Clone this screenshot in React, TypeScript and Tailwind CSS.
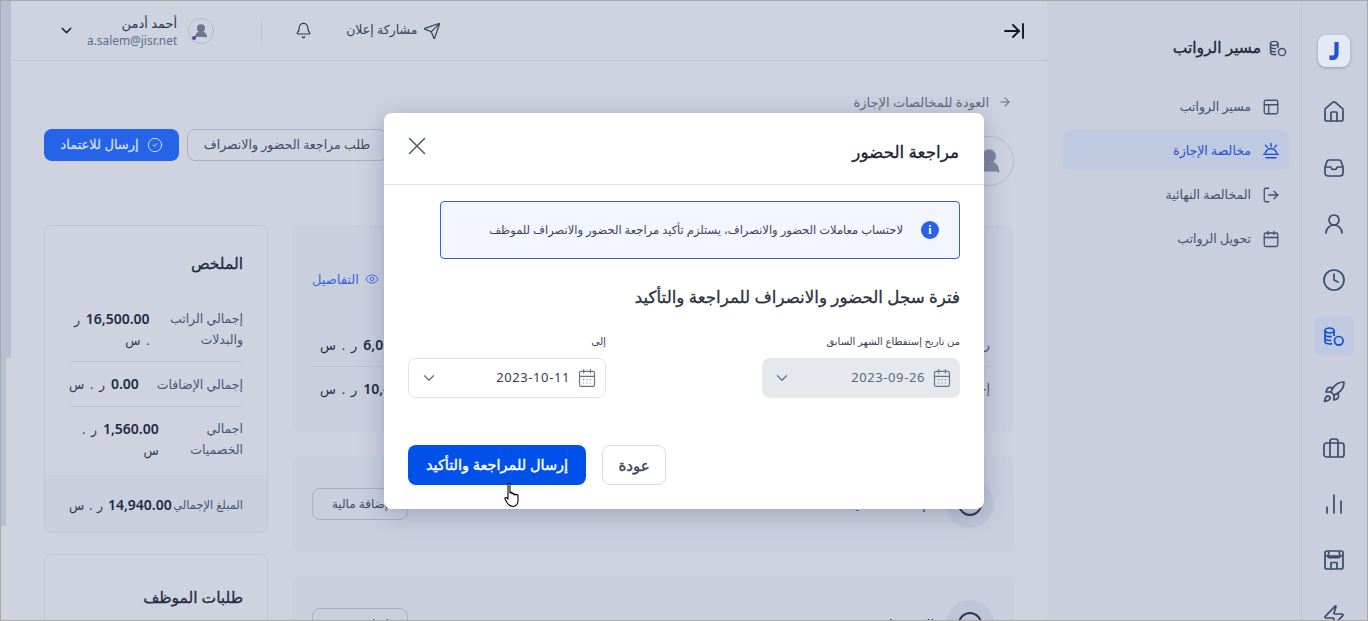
import { ArrowRight, ArrowRightToLine, Bell, CalendarDays, Calendar, ChartNoAxesColumn, ChevronDown, CircleCheck, Clock, Eye, House, PanelsTopLeft, Rocket, Send, UserRound, X, Zap, LogOut } from "lucide-react";

function CoinsIcon({ className }: { className?: string }) {
  return (
    <svg viewBox="0 0 24 24" fill="none" stroke="currentColor" strokeWidth="1.7" className={className}>
      <path d="M12 6.500c0 1.400-2.200 2.500-4.500 2.500S3 7.900 3 6.500 5.200 4 7.500 4 12 5.100 12 6.500Z" />
      <path d="M3 6.500v11C3 18.900 5.200 20 7.500 20c.9 0 1.800-.1 2.500-.4M12 6.500V12M3 10.200c0 1.400 2.200 2.500 4.500 2.500.8 0 1.500-.1 2.200-.3M3 14c0 1.400 2.200 2.500 4.500 2.500.6 0 1.200-.1 1.800-.2" />
      <circle cx="16.800" cy="16.800" r="4.300" />
    </svg>
  );
}

function InboxIcon({ className }: { className?: string }) {
  return (
    <svg viewBox="0 0 24 24" fill="none" stroke="currentColor" strokeWidth="1.7" strokeLinejoin="round" className={className}>
      <path d="M7 4h10c1 0 1.700.5 2.100 1.400L21 11v6a3 3 0 0 1-3 3H6a3 3 0 0 1-3-3v-6l1.900-5.600C5.300 4.500 6 4 7 4Z" />
      <path d="M3 11h5c.6 0 1 .4 1.200.9.3.9 1.400 1.600 2.800 1.600s2.500-.7 2.800-1.600c.2-.5.6-.9 1.200-.9h5" />
    </svg>
  );
}

function CaseIcon({ className }: { className?: string }) {
  return (
    <svg viewBox="0 0 24 24" fill="none" stroke="currentColor" strokeWidth="1.700" strokeLinejoin="round" className={className}>
      <rect x="2" y="7" width="20" height="14" rx="2.500" />
      <path d="M8 21V7M16 21V7M8 7V5.500A2.500 2.500 0 0 1 10.500 3h3A2.500 2.500 0 0 1 16 5.500V7" />
    </svg>
  );
}

function StoreIcon({ className }: { className?: string }) {
  return (
    <svg viewBox="0 0 24 24" fill="none" stroke="currentColor" strokeWidth="1.700" strokeLinejoin="round" className={className}>
      <rect x="3" y="3" width="18" height="18" rx="2" />
      <path d="M3 8h18M7 3.500 6 8c0 2.200 3 2.200 3 0 0 2.200 3 2.200 3 0 0 2.200 3 2.200 3 0 0 2.200 3 2.200 3 0l-1-4.500" />
      <path d="M9 21v-6.500h6V21" />
    </svg>
  );
}

function DiningIcon({ className }: { className?: string }) {
  return (
    <svg viewBox="0 0 24 24" fill="none" stroke="currentColor" strokeWidth="1.700" strokeLinecap="round" className={className}>
      <path d="M5 16a7 7 0 0 1 14 0M3 16h18M6 20h12M12 3v3.500M5.500 5l2 2.500M18.500 5l-2 2.500" />
    </svg>
  );
}

function Money({ amount }: { amount: string }) {
  return <b className="text-[14px] font-semibold tracking-[0.3px] text-[#1f2a44]" dir="ltr">{amount}</b>;
}

const rail = [
  { icon: <House className="size-6" strokeWidth={1.7} />, key: "home" },
  { icon: <InboxIcon className="size-6" />, key: "inbox" },
  { icon: <UserRound className="size-6" strokeWidth={1.7} />, key: "user" },
  { icon: <Clock className="size-6" strokeWidth={1.7} />, key: "clock" },
  { icon: <CoinsIcon className="size-6" />, key: "coins", active: true },
  { icon: <Rocket className="size-6" strokeWidth={1.7} />, key: "rocket" },
  { icon: <CaseIcon className="size-6" />, key: "case" },
  { icon: <ChartNoAxesColumn className="size-6" strokeWidth={1.7} />, key: "chart" },
  { icon: <StoreIcon className="size-6" />, key: "store" },
  { icon: <Zap className="size-6" strokeWidth={1.7} />, key: "zap" },
];

const subnav = [
  { label: "مسير الرواتب", icon: <PanelsTopLeft className="size-[18px]" strokeWidth={1.7} /> },
  { label: "مخالصة الإجازة", icon: <DiningIcon className="size-[20px]" />, active: true },
  { label: "المخالصة النهائية", icon: <LogOut className="size-[18px]" strokeWidth={1.7} /> },
  { label: "تحويل الرواتب", icon: <Calendar className="size-[18px]" strokeWidth={1.7} /> },
];

function DateField({ value, disabled }: { value: string; disabled?: boolean }) {
  return (
    <div className={`flex h-10 w-[198px] items-center justify-between rounded-lg pl-[11px] pr-[8px] ${disabled ? "bg-[#e5e8ec] text-[#5c6780]" : "border border-[#e0e3e9] bg-white text-[#333d52]"}`}>
      <div className="flex items-center gap-[7px]">
        <CalendarDays className="size-[20px] text-[#69748a]" strokeWidth={1.4} />
        <span className="text-[13px] tracking-[0.6px]" dir="ltr">{value}</span>
      </div>
      <ChevronDown className="size-[18px] text-[#69748a]" strokeWidth={1.8} />
    </div>
  );
}

function RequestCard({ title, action }: { title: string; action: string }) {
  return (
    <section className="flex h-[96px] shrink-0 items-center justify-between rounded-lg bg-[#c9cfdd] px-5">
      <div className="flex items-center gap-3">
        <div className="flex size-12 items-center justify-center rounded-full bg-[#bfc6d8]">
          <div className="size-6 rounded-full border-2 border-[#2c3552]" />
        </div>
        <span className="pt-[2px] text-[13px] font-medium">{title}</span>
      </div>
      <div className="flex h-8 w-[96px] items-center justify-center rounded-lg border border-[#a9b0c6] text-[12px] text-[#3d4a6b]">{action}</div>
    </section>
  );
}

export default function App() {
  return (
    <div dir="rtl" className="relative flex h-[621px] w-[1368px] overflow-hidden border border-[#a9a9a9] bg-[#cfd3e0] font-['Noto_Sans','DejaVu_Sans',sans-serif] text-[#1f2a44]">
      {/* rail */}
      <nav className="flex h-full w-[66px] shrink-0 flex-col items-center overflow-hidden border-l border-[#bec4d3] bg-[#c9cfdd] pr-[1px] pt-[34px]">
        <div className="mb-[25px] flex size-8 shrink-0 items-center justify-center rounded-lg bg-[#e5e9f4] shadow-[0_1px_3px_rgba(60,70,100,0.4)]">
          <svg viewBox="0 0 12 18" preserveAspectRatio="none" className="h-[18px] w-[10px]">
            <path d="M6.500 0H11.500V11c0 4.500-2.500 7-6.500 7H0.500v-4.500H4.500c1.400 0 2-.8 2-2.500Z" fill="#1f55d6" />
          </svg>
        </div>
        <div className="flex flex-col items-center gap-4">
          {rail.map((item) => (
            <div key={item.key} className={`flex size-10 shrink-0 items-center justify-center rounded-lg ${item.active ? "bg-[#bfc9e0] text-[#0c4ce0]" : "text-[#3d4a6b]"}`}>
              {item.icon}
            </div>
          ))}
        </div>
      </nav>

      {/* sub navigation */}
      <aside className="w-[254px] shrink-0 bg-[#c9cfdd] pl-4 pr-3 pt-[35px]">
        <div className="flex items-center gap-[7px] pr-[1px]">
          <CoinsIcon className="size-[20px] text-[#3d4a6b]" />
          <span className="text-[15.500px] font-medium text-[#1b2337] [-webkit-text-stroke:0.3px]">مسير الرواتب</span>
        </div>
        <div className="mt-[27px] flex flex-col gap-1">
          {subnav.map((item) => (
            <div key={item.label} className={`flex h-10 items-center gap-[10px] rounded-lg pr-[8px] text-[12.500px] ${item.active ? "bg-[#bfc9e0] text-[#1c50d8]" : "text-[#434f6f]"}`}>
              <span className="flex w-[20px] justify-center pt-[1px]">{item.icon}</span>
              <span className="pt-[2px]">{item.label}</span>
            </div>
          ))}
        </div>
      </aside>

      {/* main */}
      <main className="min-w-0 flex-1">
        <header className="flex h-[60px] items-center justify-between border-b border-[#bec4d3] pl-[57px] pr-[21px]">
          <ArrowRightToLine className="size-6 text-[#0f1525]" strokeWidth={1.9} />
          <div className="flex items-center">
            <div className="flex items-center gap-[6px] text-[12.500px] text-[#333e5c]">
              <Send className="size-[18px]" strokeWidth={1.6} />
              <span>مشاركة إعلان</span>
            </div>
            <Bell className="mr-[34px] size-[17px] text-[#2c3552]" strokeWidth={1.6} />
            <div className="ml-[47px] mr-[33px] h-6 w-px bg-[#bec4d3]" />
            <div className="relative flex size-[26px] items-center justify-center rounded-full border border-[#b5bacb]">
              <UserRound className="size-4 text-[#6d7692]" fill="#6d7692" />
              <span className="absolute bottom-[3px] left-[3px] size-1 rounded-full bg-[#5b3cc4]" />
            </div>
            <div className="mr-[11px] flex flex-col items-start">
              <span className="text-[13px] leading-[18px] text-[#2c3552]">أحمد أدمن</span>
              <span className="text-[11.900px] leading-[16px] text-[#5c6b8c]">a.salem@jisr.net</span>
            </div>
            <ChevronDown className="mr-[12px] size-[17px] text-[#1f2a44]" strokeWidth={2} />
          </div>
        </header>

        <div className="pl-[43px] pr-[33px] pt-[32px]">
          <div className="flex items-center gap-[9px] pr-[2px] text-[13px] leading-[18px] text-[#5f6a86]">
            <ArrowRight className="size-[14px]" strokeWidth={1.8} />
            <span>العودة للمخالصات الإجازة</span>
          </div>

          <div className="mt-[18px] flex items-start justify-between">
            <div className="mt-[7px] flex size-[50px] items-center justify-center rounded-full border border-[#b5bacb]">
              <UserRound className="size-7 text-[#7d87a3]" fill="#7d87a3" />
            </div>
            <div className="flex gap-2">
              <div className="flex h-8 w-[200px] items-center justify-center rounded-lg border border-[#a9b0c6] text-[12.500px] text-[#3d4a6b]">طلب مراجعة الحضور والانصراف</div>
              <div className="flex h-8 w-[135px] items-center justify-center gap-2 rounded-lg bg-[#2563e8] text-[13px] font-medium text-[#d5def5] [-webkit-text-stroke:0.3px]">
                <CircleCheck className="size-4" strokeWidth={1.5} />
                <span>إرسال للاعتماد</span>
              </div>
            </div>
          </div>

          <div className="mt-[39px] flex gap-6">
            {/* right column */}
            <div className="flex min-w-0 flex-1 flex-col gap-6">
              <section className="h-[207px] shrink-0 rounded-lg bg-[#c9cfdd] px-5 pt-[43px]">
                <div className="flex items-center justify-between">
                  <span className="mr-[40px] text-[15px] font-medium">الرصيد</span>
                  <div className="flex items-center gap-[6px] text-[13px] text-[#3868e0]">
                    <Eye className="size-[14px]" strokeWidth={1.6} />
                    <span>التفاصيل</span>
                  </div>
                </div>
                <div className="mt-[34px] flex h-[42px] items-center justify-between border-b border-[#bec4d3] pl-2 text-[13px]">
                  <span className="mr-[4px] text-[#475475]">رصيد الإجازات</span>
                  <span className="[word-spacing:2.500px]"><Money amount="6,050.00" /> ر . س</span>
                </div>
                <div className="flex h-[44px] items-center justify-between pl-2 text-[13px]">
                  <span className="mr-[4px] text-[#475475]">إجمالي الرصيد</span>
                  <span className="[word-spacing:2.500px]"><Money amount="10,450.00" /> ر . س</span>
                </div>
              </section>
              <RequestCard title="الإضافات المالية" action="إضافة مالية" />
              <RequestCard title="الخصومات" action="إضافة خصم" />
            </div>

            {/* left column */}
            <div className="flex w-[224px] shrink-0 flex-col gap-[21px]">
              <section className="h-[308px] shrink-0 overflow-hidden rounded-lg border border-[#bec4d3]">
                <h2 className="px-6 pt-[24px] text-[15.500px] font-medium leading-[26px] [-webkit-text-stroke:0.3px]">الملخص</h2>
                <div className="px-6 pt-[32px] text-[12.500px] leading-[21px] text-[#475475]">
                  <div className="flex items-start justify-between border-b border-[#bec4d3] pb-[10px]">
                    <span>إجمالي الراتب<br />والبدلات</span>
                    <span className="ml-[5px] text-[#2c3552] [word-spacing:2.500px]"><Money amount="16,500.00" /> ر<br />. س</span>
                  </div>
                  <div className="flex h-[45px] items-center justify-between border-b border-[#bec4d3]">
                    <span>إجمالي الإضافات</span>
                    <span className="text-[#2c3552] [word-spacing:2.500px]"><Money amount="0.00" /> ر . س</span>
                  </div>
                  <div className="flex items-start justify-between pt-[11px]">
                    <span>اجمالي<br />الخصميات</span>
                    <span className="ml-[13px] text-[#2c3552] [word-spacing:2.500px]"><Money amount="1,560.00" /> ر .<br />س</span>
                  </div>
                </div>
                <div className="mt-[14px] flex h-[60px] items-center justify-between whitespace-nowrap bg-[#c9cfdd] px-6 text-[11.500px] text-[#475475]">
                  <span>المبلغ الإجمالي</span>
                  <span className="text-[12.500px] text-[#2c3552] [word-spacing:1.500px]"><Money amount="14,940.00" /> ر . س</span>
                </div>
              </section>
              <section className="h-[120px] shrink-0 rounded-lg border border-[#bec4d3] px-6 pt-[29px]">
                <h2 className="text-[15.500px] font-medium leading-[26px] [-webkit-text-stroke:0.3px]">طلبات الموظف</h2>
              </section>
            </div>
          </div>
        </div>
      </main>

      {/* scrollbar */}
      <div className="absolute left-0 top-0 h-[357px] w-[10px] bg-[#b9bfd2]" />
      <div className="absolute left-0 top-[357px] h-[168px] w-[5px] bg-[#b9bfd2]" />

      {/* modal */}
      <div className="absolute left-[383px] top-[112px] h-[396px] w-[600px] rounded-lg bg-white shadow-[0_4px_24px_rgba(40,50,90,0.28)]">
        <div className="flex h-[72px] items-start justify-between border-b border-[#e2e4e9] px-[25px]">
          <h2 className="pt-[26px] text-[16.800px] font-medium leading-[26px] text-[#1a2233] [-webkit-text-stroke:0.3px]">مراجعة الحضور</h2>
          <X className="-ml-[7px] mt-[18px] size-[30px] text-[#4d6070]" strokeWidth={1.3} />
        </div>
        <div className="px-6 pt-4">
          <div className="flex h-[58px] w-[520px] items-center gap-[18px] rounded-[4px] border border-[#2f62dd] bg-[#f3f6fe] pr-5">
            <span className="flex size-[18px] items-center justify-center rounded-full bg-[#2563eb] font-['Liberation_Serif',serif] text-[12px] font-bold text-white">i</span>
            <p className="text-[11.500px] text-[#3b4456]">لاحتساب معاملات الحضور والانصراف، يستلزم تأكيد مراجعة الحضور والانصراف للموظف</p>
          </div>
          <h3 className="mt-[24px] text-[16.700px] font-medium leading-[28px] text-[#2a3140] [-webkit-text-stroke:0.3px]">فترة سجل الحضور والانصراف للمراجعة والتأكيد</h3>
          <div className="mt-[22px] flex justify-between">
            <div>
              <label className="block text-[10px] leading-[16px] text-[#3b4456]">من تاريخ إستقطاع الشهر السابق</label>
              <div className="mt-[9px]"><DateField value="2023-09-26" disabled /></div>
            </div>
            <div>
              <label className="block text-[10.500px] leading-[16px] text-[#3b4456]">إلى</label>
              <div className="mt-[9px]"><DateField value="2023-10-11" /></div>
            </div>
          </div>
          <div className="mt-[47px] flex justify-start gap-4 pr-[294px]">
            <div className="flex h-10 w-16 items-center justify-center rounded-lg border border-[#d9dce4] text-[15px] font-medium text-[#3b4456] [-webkit-text-stroke:0.4px]">عودة</div>
            <div className="flex h-10 w-[178px] items-center justify-center rounded-lg bg-[#0051ea] text-[14.500px] font-medium text-white [-webkit-text-stroke:0.4px]">إرسال للمراجعة والتأكيد</div>
          </div>
        </div>
      </div>

      {/* cursor */}
      <svg viewBox="0 0 18 26" className="absolute left-[503px] top-[481px] h-[26px] w-[18px]" fill="#fff" stroke="#000" strokeWidth="1.100" strokeLinejoin="round">
        <path d="M4 2c0-1.300 2-1.300 2 0v9c0-1 2-1 2 0v1c0-1 2-1 2 0v1c0-1 2-1 2 0 0-.8 2-.6 2 .5v5c0 3-1.800 6-5 6-3 0-4.500-1.500-6-4l-2-3.500c-.6-1.200 1-2 2-1l1 1Z" />
      </svg>
    </div>
  );
}
